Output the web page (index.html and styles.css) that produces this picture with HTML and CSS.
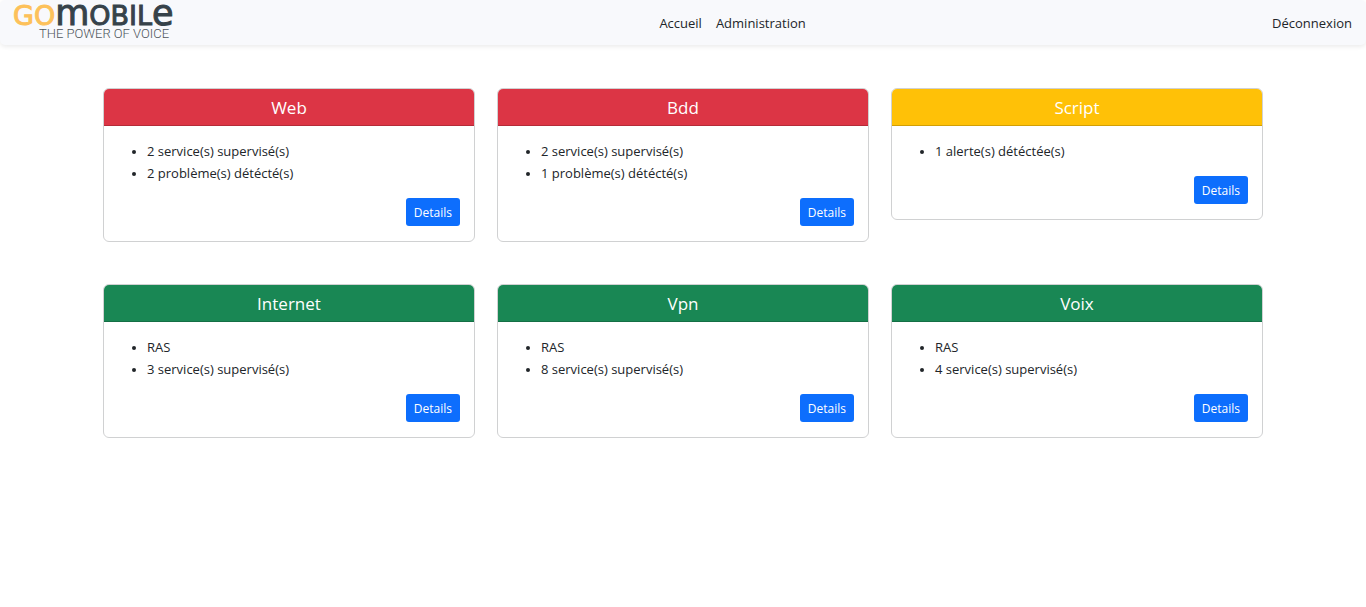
FILE: index.html
```html
<!DOCTYPE html>
<html lang="fr">
<head>
<meta charset="utf-8">
<meta name="viewport" content="width=device-width, initial-scale=1">
<title>GoMobile</title>
<link rel="stylesheet" href="styles.css">
</head>
<body>
<header class="navbar">
  <a class="brand" href="#" aria-label="GoMobile, the power of voice">
    <svg width="179" height="36" viewBox="0 0 179 36" aria-hidden="true">
      <text class="brand-name" x="-1" y="20"><tspan class="brand-go">GO</tspan><tspan class="brand-round">m</tspan>OBIL<tspan class="brand-round">e</tspan></text>
      <text class="brand-tagline" x="25" y="33">THE POWER OF VOICE</text>
    </svg>
  </a>
  <nav class="nav-links">
    <a href="#">Accueil</a>
    <a href="#">Administration</a>
  </nav>
  <a class="logout" href="#">Déconnexion</a>
</header>
<main class="cards">
  <section class="card">
    <h2 class="card-header danger">Web</h2>
    <div class="card-body">
      <ul><li>2 service(s) supervisé(s)</li><li>2 problème(s) détécté(s)</li></ul>
      <button class="btn" type="button">Details</button>
    </div>
  </section>
  <section class="card">
    <h2 class="card-header danger">Bdd</h2>
    <div class="card-body">
      <ul><li>2 service(s) supervisé(s)</li><li>1 problème(s) détécté(s)</li></ul>
      <button class="btn" type="button">Details</button>
    </div>
  </section>
  <section class="card">
    <h2 class="card-header warning">Script</h2>
    <div class="card-body">
      <ul><li>1 alerte(s) détéctée(s)</li></ul>
      <button class="btn" type="button">Details</button>
    </div>
  </section>
  <section class="card">
    <h2 class="card-header success">Internet</h2>
    <div class="card-body">
      <ul><li>RAS</li><li>3 service(s) supervisé(s)</li></ul>
      <button class="btn" type="button">Details</button>
    </div>
  </section>
  <section class="card">
    <h2 class="card-header success">Vpn</h2>
    <div class="card-body">
      <ul><li>RAS</li><li>8 service(s) supervisé(s)</li></ul>
      <button class="btn" type="button">Details</button>
    </div>
  </section>
  <section class="card">
    <h2 class="card-header success">Voix</h2>
    <div class="card-body">
      <ul><li>RAS</li><li>4 service(s) supervisé(s)</li></ul>
      <button class="btn" type="button">Details</button>
    </div>
  </section>
</main>
</body>
</html>
```
FILE: styles.css
```css
*, *::before, *::after { box-sizing: border-box; }

body {
  margin: 0;
  background: #fff;
  color: #212529;
  font-family: "Open Sans", "Noto Sans", sans-serif;
  font-size: 13px;
  line-height: 22px;
}

a { color: inherit; text-decoration: none; }

.navbar {
  display: flex;
  align-items: center;
  justify-content: space-between;
  padding: 5px 14px 4px;
  background: #f8f9fc;
  border-radius: 5px;
  box-shadow: 0 2px 4px rgba(0, 0, 0, 0.075);
}

.brand svg { display: block; overflow: visible; }
.brand-name {
  font-family: "DejaVu Sans", sans-serif;
  font-size: 27px;
  font-weight: 400;
  fill: #36424a;
  stroke: #36424a;
  stroke-width: 1px;
}
.brand-go { fill: #fdc15a; stroke: #fdc15a; }
.brand-round { font-size: 35px; }
.brand-tagline {
  font-family: Roboto, sans-serif;
  font-size: 13px;
  font-weight: 300;
  fill: #4d555b;
}

.nav-links { display: flex; gap: 14px; }

.cards {
  display: grid;
  grid-template-columns: repeat(3, 1fr);
  gap: 42px 22px;
  align-items: start;
  max-width: 1160px;
  margin: 43px auto 0;
}

.card {
  overflow: hidden;
  border: 1px solid #d0d1d2;
  border-radius: 6px;
}
.card-header {
  margin: 0;
  padding: 8px 14px 6px;
  border-bottom: 1px solid rgba(0, 0, 0, 0.175);
  color: #fff;
  font-size: 17px;
  font-weight: 400;
  line-height: 22px;
  text-align: center;
}
.danger { background: #dc3545; }
.warning { background: #ffc107; }
.success { background: #198754; }

.card-body {
  display: flex;
  flex-direction: column;
  gap: 14px;
  padding: 14px 14px 15px;
}
.card-body ul { margin: 0; padding-left: 29px; }
.card-body li::marker { font-size: 11px; }

.btn {
  align-self: flex-end;
  padding: 5px 8px 3px;
  border: 0;
  border-radius: 3px;
  background: #0d6efd;
  color: #fff;
  font: inherit;
  font-size: 12px;
  line-height: 20px;
  cursor: pointer;
}
```
